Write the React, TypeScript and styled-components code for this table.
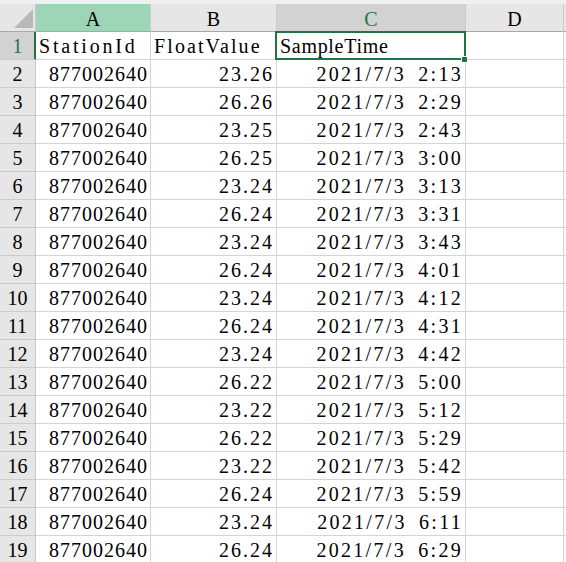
import React from 'react';
import styled, { createGlobalStyle, css } from 'styled-components';

const GlobalStyle = createGlobalStyle`
  html, body { margin: 0; padding: 0; background: #ffffff; overflow: hidden; }
  body { font-family: "Liberation Serif", "Times New Roman", serif; }
`;

const GREEN = '#217346';
const GRID = '#d4d4d4';

const Frame = styled.div`
  width: 566px;
  height: 562px;
  overflow: hidden;
  box-sizing: border-box;
  padding-top: 4px;
  background: #f0f0f0;
`;

const Grid = styled.div`
  display: grid;
  grid-template-columns: 36px 115px 126px 189px 98px 40px;
  grid-auto-rows: 28px;
  background: #ffffff;
  font-size: 20px;
  color: #000000;
`;

const baseCell = css`
  box-sizing: border-box;
  border-right: 1px solid ${GRID};
  border-bottom: 1px solid ${GRID};
  white-space: pre;
  overflow: hidden;
`;

const Corner = styled.div`
  ${baseCell};
  position: relative;
  background: #e6e6e6;
  border-right-color: #cbcbcb;
  border-bottom-color: #a8a8a8;
  &::after {
    content: '';
    position: absolute;
    right: 2px;
    bottom: 3px;
    width: 0;
    height: 0;
    border-style: solid;
    border-width: 0 0 19px 19px;
    border-color: transparent transparent #b9b9b9 transparent;
  }
`;

type HeadState = 'normal' | 'hover' | 'selected';

const ColHead = styled.div<{ $state: HeadState }>`
  ${baseCell};
  background: ${(p) => (p.$state === 'hover' ? '#9fd5b7' : p.$state === 'selected' ? '#d2d2d2' : '#e6e6e6')};
  color: ${(p) => (p.$state === 'selected' ? GREEN : '#000000')};
  border-right-color: #cbcbcb;
  border-bottom-color: #a8a8a8;
  text-align: center;
  line-height: 30px;
`;

const RowHead = styled.div<{ $selected?: boolean }>`
  ${baseCell};
  background: ${(p) => (p.$selected ? '#d2d2d2' : '#e6e6e6')};
  color: ${(p) => (p.$selected ? GREEN : '#000000')};
  border-right-color: ${(p) => (p.$selected ? GREEN : '#c6c6c6')};
  box-shadow: ${(p) => (p.$selected ? `inset -1px 0 0 ${GREEN}` : 'none')};
  border-bottom-color: #cbcbcb;
  text-align: center;
  padding-top: 2px;
  line-height: 25px;
`;

const Cell = styled.div<{ $align?: 'left' | 'right'; $spacing?: number; $wordGap?: number }>`
  ${baseCell};
  text-align: ${(p) => p.$align ?? 'left'};
  letter-spacing: ${(p) => p.$spacing ?? 0}px;
  word-spacing: ${(p) => p.$wordGap ?? 0}px;
  padding: 2px ${(p) => (p.$align === 'right' ? 2 : 0)}px 0 ${(p) => (p.$align === 'right' ? 0 : 3)}px;
  line-height: 25px;
`;

const ActiveCell = styled(Cell)`
  position: relative;
  overflow: visible;
  &::after {
    content: '';
    position: absolute;
    z-index: 1;
    left: -2px;
    top: -1px;
    right: -1px;
    bottom: -1px;
    border: 2px solid ${GREEN};
    pointer-events: none;
  }
`;

const FillHandle = styled.span`
  position: absolute;
  z-index: 2;
  right: -3px;
  bottom: -4px;
  width: 5px;
  height: 5px;
  background: ${GREEN};
  border: 1px solid #ffffff;
`;

const data: [string, string][] = [
  ['23.26', '2:13'],
  ['26.26', '2:29'],
  ['23.25', '2:43'],
  ['26.25', '3:00'],
  ['23.24', '3:13'],
  ['26.24', '3:31'],
  ['23.24', '3:43'],
  ['26.24', '4:01'],
  ['23.24', '4:12'],
  ['26.24', '4:31'],
  ['23.24', '4:42'],
  ['26.22', '5:00'],
  ['23.22', '5:12'],
  ['26.22', '5:29'],
  ['23.22', '5:42'],
  ['26.24', '5:59'],
  ['23.24', '6:11'],
  ['26.24', '6:29'],
];

export default function App() {
  return (
    <>
      <GlobalStyle />
      <Frame>
        <Grid>
          <Corner />
          <ColHead $state="hover">A</ColHead>
          <ColHead $state="normal">B</ColHead>
          <ColHead $state="selected">C</ColHead>
          <ColHead $state="normal">D</ColHead>
          <ColHead $state="normal" />

          <RowHead $selected>1</RowHead>
          <Cell $spacing={2.8}>StationId</Cell>
          <Cell $spacing={2.1}>FloatValue</Cell>
          <ActiveCell $spacing={0.7}>
            SampleTime
            <FillHandle />
          </ActiveCell>
          <Cell />
          <Cell />

          {data.map(([value, time], i) => (
            <React.Fragment key={i}>
              <RowHead>{i + 2}</RowHead>
              <Cell $align="right" $spacing={1}>877002640</Cell>
              <Cell $align="right" $spacing={2}>{value}</Cell>
              <Cell $align="right" $spacing={2.3} $wordGap={5}>{`2021/7/3 ${time}`}</Cell>
              <Cell />
              <Cell />
            </React.Fragment>
          ))}
        </Grid>
      </Frame>
    </>
  );
}
